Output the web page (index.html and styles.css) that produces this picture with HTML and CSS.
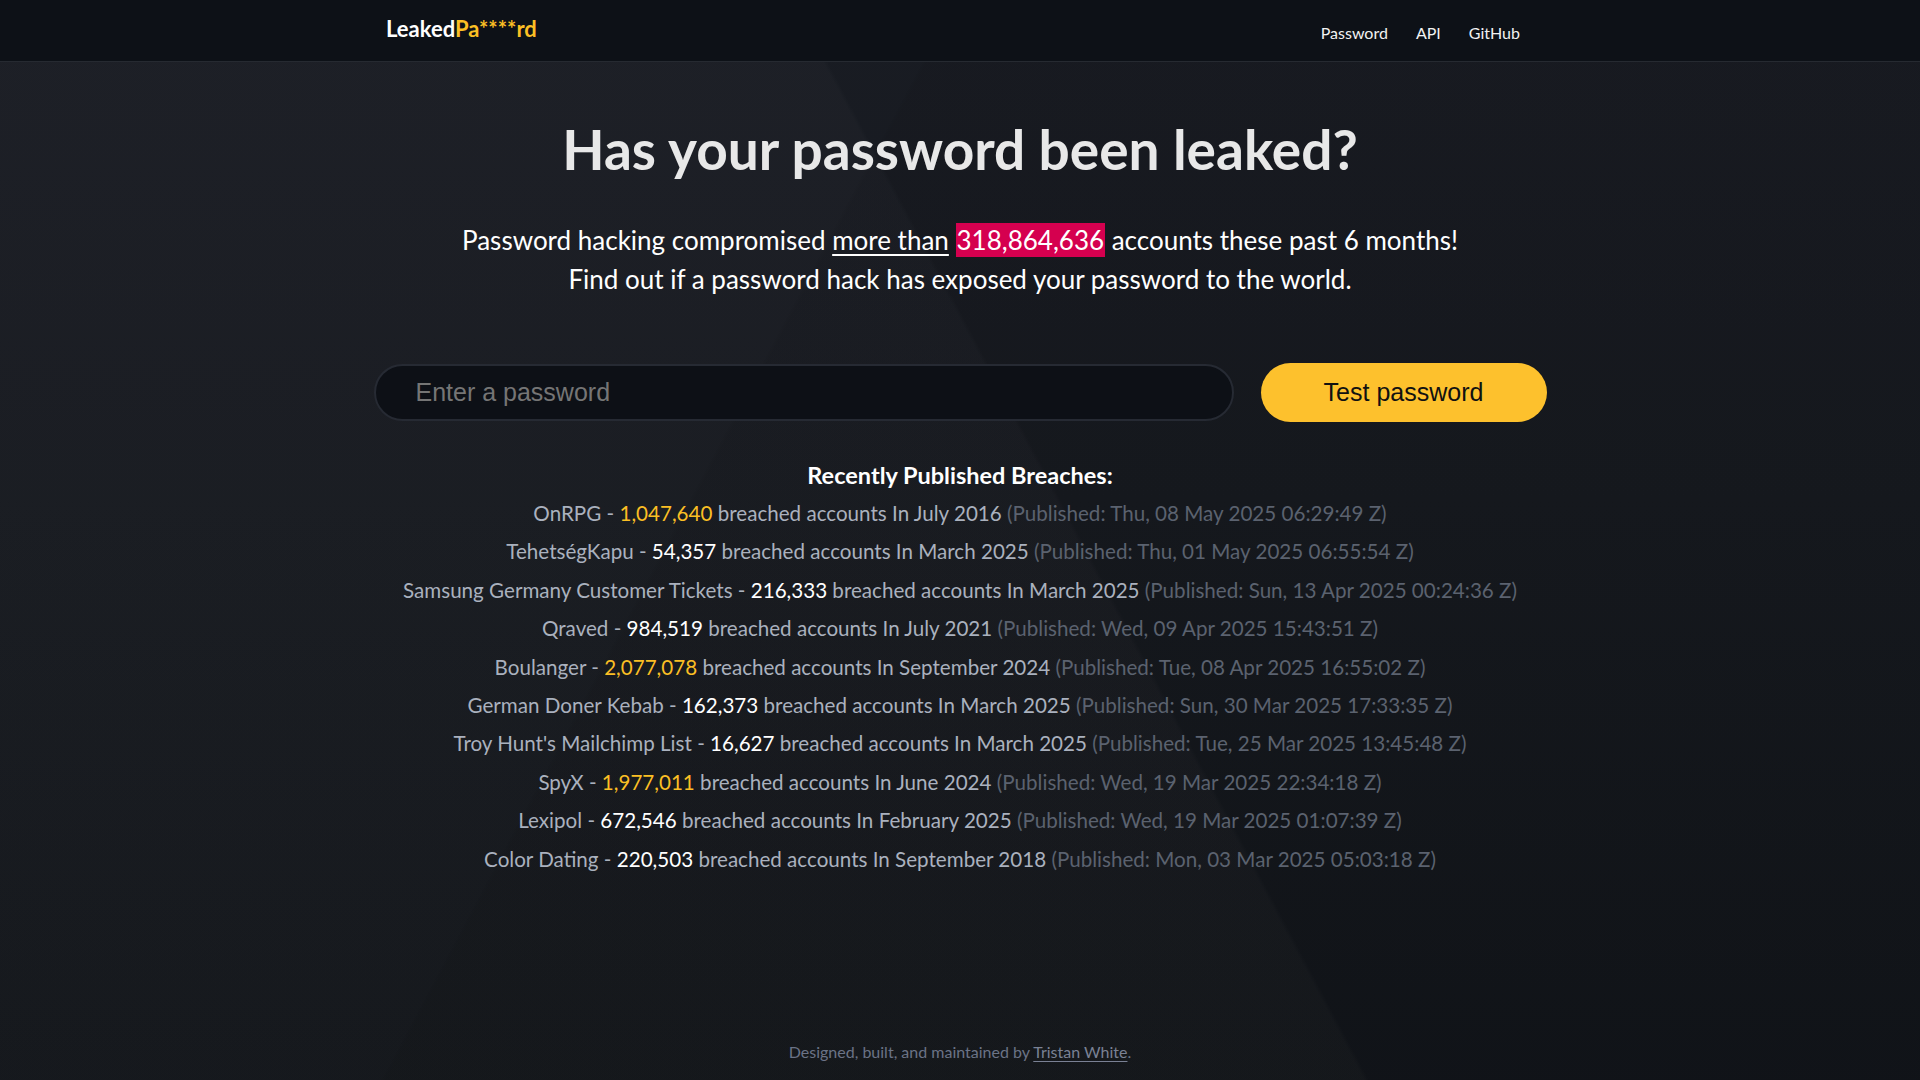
FILE: index.html
```html
<!DOCTYPE html>
<html lang="en">
<head>
<meta charset="utf-8">
<title>LeakedPassword</title>
<link rel="stylesheet" href="styles.css">
</head>
<body>
<header class="navbar">
  <div class="nav-inner">
    <a class="brand" href="#">Leaked<span class="brand-accent">Pa****rd</span></a>
    <nav class="nav-links">
      <a href="#">Password</a>
      <a href="#">API</a>
      <a href="#">GitHub</a>
    </nav>
  </div>
</header>
<main class="main">
  <h1 class="title">Has your password been leaked?</h1>
  <p class="lead">Password hacking compromised <u>more than</u> <span class="hl">318,864,636</span> accounts these past 6 months!<br>Find out if a password hack has exposed your password to the world.</p>
  <form class="search" onsubmit="return false">
    <input class="search-input" type="password" placeholder="Enter a password">
    <button class="search-btn" type="submit">Test password</button>
  </form>
  <section class="breaches">
    <h2 class="breaches-title">Recently Published Breaches:</h2>
    <ul class="breach-list">
      <li>OnRPG - <span class="count big">1,047,640</span> breached accounts In July 2016 <span class="pub">(Published: Thu, 08 May 2025 06:29:49 Z)</span></li>
      <li>TehetségKapu - <span class="count">54,357</span> breached accounts In March 2025 <span class="pub">(Published: Thu, 01 May 2025 06:55:54 Z)</span></li>
      <li>Samsung Germany Customer Tickets - <span class="count">216,333</span> breached accounts In March 2025 <span class="pub">(Published: Sun, 13 Apr 2025 00:24:36 Z)</span></li>
      <li>Qraved - <span class="count">984,519</span> breached accounts In July 2021 <span class="pub">(Published: Wed, 09 Apr 2025 15:43:51 Z)</span></li>
      <li>Boulanger - <span class="count big">2,077,078</span> breached accounts In September 2024 <span class="pub">(Published: Tue, 08 Apr 2025 16:55:02 Z)</span></li>
      <li>German Doner Kebab - <span class="count">162,373</span> breached accounts In March 2025 <span class="pub">(Published: Sun, 30 Mar 2025 17:33:35 Z)</span></li>
      <li>Troy Hunt's Mailchimp List - <span class="count">16,627</span> breached accounts In March 2025 <span class="pub">(Published: Tue, 25 Mar 2025 13:45:48 Z)</span></li>
      <li>SpyX - <span class="count big">1,977,011</span> breached accounts In June 2024 <span class="pub">(Published: Wed, 19 Mar 2025 22:34:18 Z)</span></li>
      <li>Lexipol - <span class="count">672,546</span> breached accounts In February 2025 <span class="pub">(Published: Wed, 19 Mar 2025 01:07:39 Z)</span></li>
      <li>Color Dating - <span class="count">220,503</span> breached accounts In September 2018 <span class="pub">(Published: Mon, 03 Mar 2025 05:03:18 Z)</span></li>
    </ul>
  </section>
</main>
<footer class="footer">
  <p>Designed, built, and maintained by <a href="#">Tristan White</a>.</p>
  <p>Powered by <a href="#">Have I Been Pwned</a>.</p>
</footer>
</body>
</html>
```
FILE: styles.css
```css
html, body {
  margin: 0;
  padding: 0;
}
body {
  font-family: Lato, "Noto Sans", sans-serif;
  color: #ffffff;
  background-color: #14171d;
  background-image:
    linear-gradient(118deg, rgba(255,255,255,0) 0%, rgba(255,255,255,0) 38%, rgba(0,0,0,0.06) 38.2%, rgba(0,0,0,0.06) 100%),
    linear-gradient(62deg, rgba(255,255,255,0.018) 0%, rgba(255,255,255,0.018) 55%, rgba(0,0,0,0) 55.2%),
    linear-gradient(180deg, #191c23 0%, #16191f 45%, #111419 100%);
  min-height: 100vh;
  overflow: hidden;
}
a {
  color: inherit;
  text-decoration: none;
}

/* navbar */
.navbar {
  height: 62px;
  background: #0d1117;
  border-bottom: 1px solid #262a31;
  box-sizing: border-box;
}
.nav-inner {
  width: 1148px;
  margin: 0 auto;
  height: 100%;
  display: flex;
  align-items: center;
  justify-content: space-between;
  box-sizing: border-box;
  padding-right: 14px;
}
.brand {
  font-weight: 700;
  font-size: 22px;
  color: #ffffff;
  margin-top: -4px;
}
.brand-accent {
  color: #fbbf24;
}
.nav-links {
  display: flex;
  gap: 28px;
  font-size: 16px;
  margin-top: 3px;
}
.nav-links a {
  color: #f2f2f2;
}

/* main */
.main {
  text-align: center;
}
.title {
  margin: 53px 0 0;
  font-size: 55px;
  line-height: 68px;
  font-weight: 700;
  color: #e8e8e8;
}
.lead {
  margin: 38px 0 0;
  font-size: 26px;
  line-height: 39px;
  color: #ffffff;
}
.lead u {
  text-underline-offset: 4px;
  text-decoration-thickness: 2px;
}
.hl {
  background: #d5004f;
  padding: 1px 1px;
}

/* search */
.search {
  width: 1173px;
  margin: 64px auto 0;
  display: flex;
  align-items: center;
  gap: 27px;
}
.search-input {
  flex: 1;
  height: 57px;
  box-sizing: border-box;
  border-radius: 29px;
  border: 2px solid #262a33;
  background: #0d1016;
  padding: 0 40px;
  font-family: "Liberation Sans", Arial, sans-serif;
  font-size: 25px;
  color: #dddddd;
  outline: none;
}
.search-input::placeholder {
  color: #757575;
}
.search-btn {
  width: 286px;
  height: 59px;
  border: none;
  border-radius: 30px;
  background: #fdc12d;
  color: #111111;
  font-family: "Liberation Sans", Arial, sans-serif;
  font-size: 25px;
  cursor: pointer;
}

/* breaches */
.breaches {
  margin-top: 38px;
}
.breaches-title {
  margin: 0;
  font-size: 23.5px;
  line-height: 30px;
  font-weight: 700;
  color: #ffffff;
}
.breach-list {
  list-style: none;
  margin: 4px 0 0;
  padding: 0;
  font-size: 20.6px;
  line-height: 38.4px;
  color: #aab1be;
}
.count {
  color: #ffffff;
}
.count.big {
  color: #fbbf24;
}
.pub {
  color: #5b626f;
}

/* footer */
.footer {
  margin-top: 162px;
  text-align: center;
  font-size: 16px;
  line-height: 24px;
  color: #6b7386;
}
.footer p {
  margin: 0 0 12px;
}
.footer a {
  text-decoration: underline;
  text-underline-offset: 3px;
  color: #7a8194;
}
```
